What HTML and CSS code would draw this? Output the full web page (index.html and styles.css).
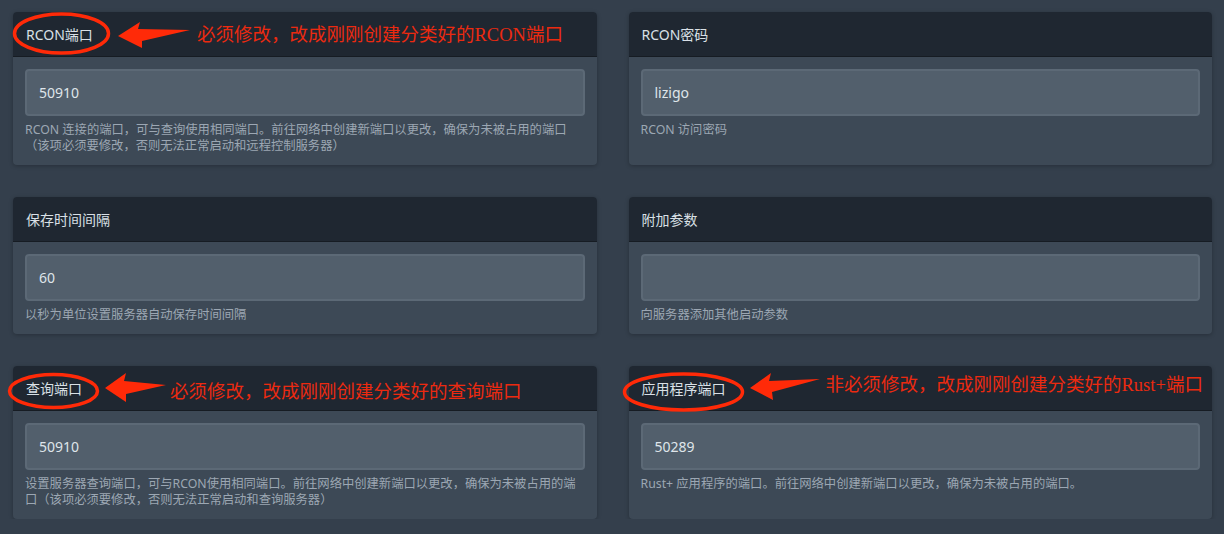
FILE: index.html
```html
<!DOCTYPE html>
<html lang="zh-CN">
<head>
  <meta charset="UTF-8">
  <meta name="viewport" content="width=device-width, initial-scale=1.0">
  <title>服务器设置</title>
  <link rel="stylesheet" href="styles.css">
</head>
<body>

  <div class="settings-grid">
    <!-- RCON 端口 -->
    <div class="card">
      <div class="card-header">RCON端口</div>
      <div class="card-body">
        <input type="text" value="50910">
        <p class="help">RCON 连接的端口，可与查询使用相同端口。前往网络中创建新端口以更改，确保为未被占用的端口<br>（该项必须要修改，否则无法正常启动和远程控制服务器）</p>
      </div>
      <svg class="mark mark-rcon" width="200" height="50" viewBox="0 0 200 50">
        <ellipse cx="56.5" cy="21.5" rx="47" ry="19.5" />
        <path d="M113 24 L135 10 L133 17 L185 18 L137 29 L137 36 Z" />
      </svg>
      <span class="note note-rcon">必须修改，改成刚刚创建分类好的<span class="latin">RCON</span>端口</span>
    </div>

    <!-- RCON 密码 -->
    <div class="card">
      <div class="card-header">RCON密码</div>
      <div class="card-body">
        <input type="text" value="lizigo">
        <p class="help">RCON 访问密码</p>
      </div>
    </div>

    <!-- 保存间隔 -->
    <div class="card">
      <div class="card-header">保存时间间隔</div>
      <div class="card-body">
        <input type="text" value="60">
        <p class="help">以秒为单位设置服务器自动保存时间间隔</p>
      </div>
    </div>

    <!-- 附加参数 -->
    <div class="card">
      <div class="card-header">附加参数</div>
      <div class="card-body">
        <input type="text" value="">
        <p class="help">向服务器添加其他启动参数</p>
      </div>
    </div>

    <!-- 查询端口 -->
    <div class="card">
      <div class="card-header">查询端口</div>
      <div class="card-body">
        <input type="text" value="50910">
        <p class="help">设置服务器查询端口，可与RCON使用相同端口。前往网络中创建新端口以更改，确保为未被占用的端<br>口（该项必须要修改，否则无法正常启动和查询服务器）</p>
      </div>
      <svg class="mark mark-query" width="170" height="50" viewBox="0 0 170 50">
        <ellipse cx="48.5" cy="25" rx="44" ry="16.5" />
        <path d="M100 22 L121 7 L119 15 L161 19 L121 28 L121 36 Z" />
      </svg>
      <span class="note note-query">必须修改，改成刚刚创建分类好的查询端口</span>
    </div>

    <!-- 应用程序端口 -->
    <div class="card">
      <div class="card-header">应用程序端口</div>
      <div class="card-body">
        <input type="text" value="50289">
        <p class="help">Rust+ 应用程序的端口。前往网络中创建新端口以更改，确保为未被占用的端口。</p>
      </div>
      <svg class="mark mark-app" width="210" height="50" viewBox="0 0 210 50">
        <ellipse cx="62.5" cy="26" rx="59" ry="18" />
        <path d="M129 22 L150 7 L148 15 L199 13 L151 26 L152 34 Z" />
      </svg>
      <span class="note note-app">非必须修改，改成刚刚创建分类好的<span class="latin">Rust+</span>端口</span>
    </div>
  </div>

</body>
</html>
```

FILE: styles.css
```css
body {
  margin: 0;
  background-color: #343f4c;
  font-family: "Noto Sans", "Noto Sans CJK SC", sans-serif;
  color: #d9e0e6;
}

.settings-grid {
  display: grid;
  grid-template-columns: 1fr 1fr;
  gap: 32px;
  padding: 12px 12px 0 13px;
}

.card {
  position: relative;
  background-color: #3d4956;
  border-radius: 4px;
  box-shadow: 0 1px 4px rgba(0, 0, 0, 0.25);
}

.card-header {
  display: flex;
  align-items: center;
  height: 44px;
  padding: 0 13px;
  background-color: #1f2731;
  border-bottom: 1px solid #161c23;
  border-radius: 4px 4px 0 0;
  font-size: 14px;
}

.card-body {
  padding: 12px 12px 11px;
}

.card-body input {
  display: block;
  width: 100%;
  height: 47px;
  box-sizing: border-box;
  padding: 0 12px;
  background-color: #525f6c;
  border: 2px solid #5c6976;
  border-radius: 4px;
  color: #dfe5ea;
  font-family: inherit;
  font-size: 14px;
  outline: none;
}

.help {
  margin: 6px 0 0;
  font-size: 12.3px;
  line-height: 16px;
  color: #9ca7b3;
}

/* red annotations drawn over the headers */
.mark {
  position: absolute;
  top: 0;
  left: -8px;
  overflow: visible;
}

.mark ellipse {
  fill: none;
  stroke: #ff2a08;
  stroke-width: 3.5;
}

.mark path {
  fill: #ff2a08;
}

.note {
  position: absolute;
  font-family: "Noto Sans CJK SC", sans-serif;
  font-size: 18.5px;
  line-height: 24px;
  color: #ec2a10;
  white-space: nowrap;
}

.note .latin {
  font-family: "Liberation Serif", serif;
}

.note-rcon {
  left: 184px;
  top: 9px;
}

.note-query {
  left: 157px;
  top: 12px;
}

.note-app {
  left: 197px;
  top: 5px;
}
```
